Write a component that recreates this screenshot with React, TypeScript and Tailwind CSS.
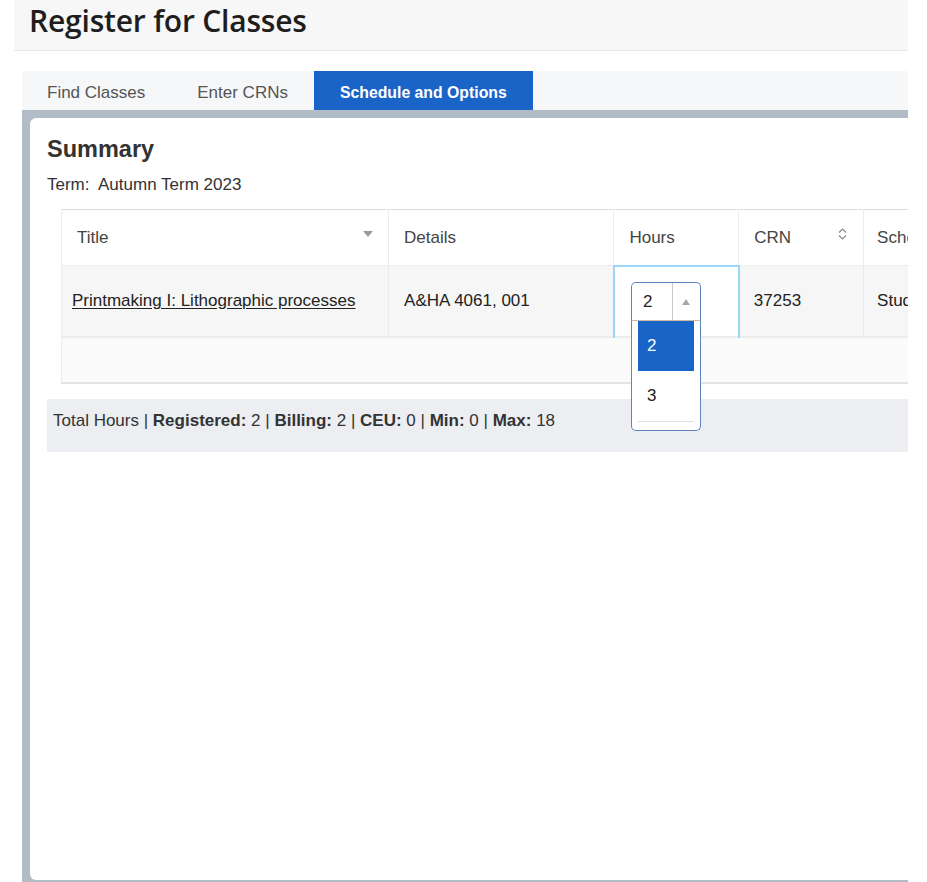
import { useState } from 'react'

// Registration page: header, tab strip and the schedule summary with the
// hours picker left open on the first row.

type Course = {
  title: string
  details: string
  hours: number
  crn: string
  schedule: string
}

const courses: Course[] = [
  {
    title: 'Printmaking I: Lithographic processes',
    details: 'A&HA 4061, 001',
    hours: 2,
    crn: '37253',
    schedule: 'Studio',
  },
]

const hourOptions = [2, 3]

const tabs = ['Find Classes', 'Enter CRNs', 'Schedule and Options']

function SortDown() {
  return (
    <svg width="10" height="6" viewBox="0 0 10 6" className="shrink-0">
      <path d="M0 0h10L5 6z" fill="#9a9a9a" />
    </svg>
  )
}

function SortBoth() {
  return (
    <svg width="9" height="12" viewBox="0 0 9 12" className="shrink-0">
      <path d="M1 4.5L4.5 1 8 4.5M1 7.5L4.5 11 8 7.5" fill="none" stroke="#8a8a8a" strokeWidth="1.2" />
    </svg>
  )
}

function HoursPicker({ value }: { value: number }) {
  const [selected, setSelected] = useState(value)
  return (
    <div className="relative h-[38px] w-[70px]">
      <div className="flex h-full items-stretch rounded-t-[5px] border border-b-0 border-[#5b86c4] bg-white">
        <span className="flex flex-1 items-center pl-[11px] text-[17px] text-[#222]">{selected}</span>
        <span className="flex w-[28px] items-center justify-center border-l border-[#c9c9c9]">
          <svg width="8" height="6" viewBox="0 0 8 6">
            <path d="M0 6h8L4 0z" fill="#a8a8a8" />
          </svg>
        </span>
      </div>
      <ul className="absolute left-0 top-[38px] z-10 w-[70px] rounded-b-[5px] border border-t-[#cdb9a3] border-[#5b86c4] bg-white px-[6px] pb-[8px]">
        {hourOptions.map((h) => (
          <li
            key={h}
            onClick={() => setSelected(h)}
            className={`flex h-[50px] items-center pl-[9px] text-[17px] ${
              h === selected ? 'bg-[#1a64c8] text-white' : 'text-[#222]'
            }`}
          >
            {h}
          </li>
        ))}
        <li className="h-px bg-[#e2e2e2]" />
      </ul>
    </div>
  )
}

export default function App() {
  const [activeTab, setActiveTab] = useState('Schedule and Options')

  return (
    <div className="h-[882px] w-[927px] overflow-hidden bg-white font-['Liberation_Sans',Arial,sans-serif] text-[#333]">
      <header className="ml-[14px] flex h-[51px] w-[894px] items-start border-b border-[#e8e8e8] bg-[#f7f7f7] pl-[15px]">
        <h1 className="font-['Open_Sans',sans-serif] text-[30px] font-semibold leading-[42px] tracking-[-0.2px] text-[#1e1e1e]">
          Register for Classes
        </h1>
      </header>

      <nav className="ml-[22px] mt-[20px] flex h-[39px] w-[886px] items-stretch bg-[#f6f7f8] pl-[25px]">
        {tabs.map((t, i) => (
          <button
            key={t}
            type="button"
            onClick={() => setActiveTab(t)}
            className={`flex items-center pt-[5px] ${
              t === activeTab
                ? 'bg-[#1a64c8] px-[26px] text-[15.8px] font-bold text-white'
                : `${i === 0 ? 'mr-[52px]' : 'mr-[26px]'} text-[17px] text-[#555]`
            }`}
          >
            {t}
          </button>
        ))}
      </nav>

      <div className="ml-[22px] h-[772px] w-[886px] bg-[#b1bcc6] pb-[2px] pl-[8px] pt-[8px]">
        <section className="h-full overflow-hidden rounded-l-[6px] bg-white pl-[17px] pt-[16px]">
          <h2 className="text-[23.5px] font-bold leading-[30px] text-[#333]">Summary</h2>
          <p className="mt-[10px] text-[17px] leading-[22px] text-[#333]">Term:&nbsp; Autumn Term 2023</p>

          <div className="ml-[14px] mt-[13px] w-[900px]">
            <table className="table-fixed border-collapse text-left text-[17px]">
              <colgroup>
                <col className="w-[328px]" />
                <col className="w-[226px]" />
                <col className="w-[125px]" />
                <col className="w-[125px]" />
                <col className="w-[96px]" />
              </colgroup>
              <thead>
                <tr className="h-[56px] border-t border-[#dcdcdc] text-[#444]">
                  <th className="border-x border-[#ececec] px-[15px] font-normal">
                    <div className="flex items-center justify-between">
                      <span>Title</span>
                      <span className="-mt-[8px]">
                        <SortDown />
                      </span>
                    </div>
                  </th>
                  <th className="border-r border-[#ececec] px-[15px] font-normal">Details</th>
                  <th className="border-r border-[#ececec] px-[15px] font-normal">Hours</th>
                  <th className="border-r border-[#ececec] px-[15px] font-normal">
                    <div className="flex items-center justify-between">
                      <span>CRN</span>
                      <span className="-mt-[8px] mr-[1px]">
                        <SortBoth />
                      </span>
                    </div>
                  </th>
                  <th className="px-[13px] font-normal">Schedule</th>
                </tr>
              </thead>
              <tbody>
                {courses.map((c) => (
                  <tr key={c.crn} className="h-[71px] border-t border-[#ececec] bg-[#f6f6f6] text-[#222]">
                    <td className="border-x border-[#ececec] px-[10px]">
                      <a href="#" className="underline underline-offset-2">
                        {c.title}
                      </a>
                    </td>
                    <td className="border-r border-[#ececec] px-[15px]">{c.details}</td>
                    <td className="border-x-2 border-t-2 border-x-[#9ad6f8] border-t-[#9ad6f8] bg-white px-[16px]">
                      <HoursPicker value={c.hours} />
                    </td>
                    <td className="border-r border-[#ececec] px-[14px]">{c.crn}</td>
                    <td className="px-[13px]">{c.schedule}</td>
                  </tr>
                ))}
                <tr className="h-[46px] border-y-2 border-t-[#ececec] border-b-[#e4e4e4] bg-[#fafafa]">
                  <td className="border-l border-[#ececec]" colSpan={5} />
                </tr>
              </tbody>
            </table>
          </div>

          <div className="mt-[15px] flex h-[53px] items-start bg-[#eceef2] pl-[6px] pt-[9px] text-[17px] text-[#333]">
            <p>
              Total Hours | <b>Registered:</b> 2 | <b>Billing:</b> 2 | <b>CEU:</b> 0 | <b>Min:</b> 0 |{' '}
              <b>Max:</b> 18
            </p>
          </div>
        </section>
      </div>
    </div>
  )
}
